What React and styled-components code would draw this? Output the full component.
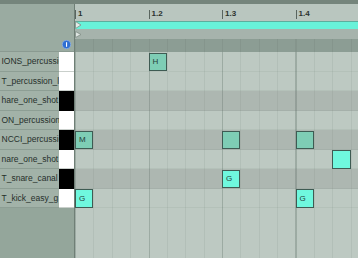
import styled, { createGlobalStyle } from 'styled-components';

const SIXTEENTH = 18.375;
const BEAT = SIXTEENTH * 4;
const ROW_H = 19.5;

let Global = createGlobalStyle`
  html, body { margin:0; padding:0; background:#bdc9c2; }
  body { font-family:"Liberation Sans", Arial, sans-serif; }
`;

let Frame = styled.div`
  width:358px; height:258px; overflow:hidden;
  display:flex; flex-flow:column;
  background:#bdc9c2;
`;

let TopStrip = styled.div`
  height:4px; background:#75857c; flex:none;
`;

let Body = styled.div`
  flex:1; display:flex; min-height:0;
`;

let LeftCol = styled.div`
  width:74px; flex:none; display:flex; flex-flow:column;
  background:#94a69b;
`;

let Divider = styled.div`
  width:1px; flex:none; background:#6f7f76;
`;

let RightCol = styled.div`
  flex:1; display:flex; flex-flow:column; min-width:0;
`;

let HeadLeft = styled.div`
  height:48px; flex:none; background:#9aaba1;
  display:flex; justify-content:flex-end; align-items:flex-end;
  padding:0 3px 2px 0; box-sizing:border-box;
  border-bottom:1px solid #8a9a91;
`;

let KeyRow = styled.div`
  height:${ROW_H}px; display:flex; flex:none;
  box-sizing:border-box;
`;

let Label = styled.div`
  width:59px; flex:none; overflow:hidden; white-space:nowrap;
  background:#a2b2a8; color:#26302b;
  font-size:8.5px; line-height:${ROW_H - 1}px;
  padding-left:1.5px; box-sizing:border-box;
  border-bottom:1px solid #8d9e94;
`;

let Key = styled.div`
  width:15px; flex:none; box-sizing:border-box;
  background:${p => (p.$black ? '#000' : '#fff')};
  border-bottom:1px solid ${p => (p.$black ? '#000' : '#c9cfcb')};
`;

let Ruler = styled.div`
  height:17px; flex:none; position:relative;
  background:#b9c6bf;
`;

let Mark = styled.div`
  position:absolute; top:8px; height:9px;
  border-left:1px solid #59655f;
  padding-left:2px;
  font-size:8px; font-weight:bold; line-height:8px; color:#2c332f;
  margin-top:-2px;
`;

let Clip = styled.div`
  height:8px; flex:none; position:relative;
  background:#68f2d9;
  border-top:1px solid #5cae9d;
  box-sizing:border-box;
`;

let LoopStrip = styled.div`
  height:10px; flex:none; position:relative;
  background:#a6b3ac;
`;

let Flag = styled.svg`
  position:absolute; left:0; top:${p => p.$top}px;
`;

let Band = styled.div`
  height:13px; flex:none; background:#8c9d94;
  background-image:repeating-linear-gradient(to right, rgba(0,0,0,0.05) 0 1px, transparent 1px ${SIXTEENTH}px);
`;

let Lanes = styled.div`
  flex:1; display:flex; flex-flow:column;
  background-color:#bdc9c2;
  background-image:
    repeating-linear-gradient(to right, rgba(70,90,80,0.2) 0 1px, transparent 1px ${BEAT}px),
    repeating-linear-gradient(to right, rgba(70,90,80,0.09) 0 1px, transparent 1px ${SIXTEENTH}px);
`;

let Lane = styled.div`
  height:${ROW_H}px; flex:none; position:relative;
  background:${p => (p.$black ? 'rgba(120,120,120,0.22)' : 'transparent')};
  box-shadow:inset 0 -1px 0 rgba(80,100,90,0.08);
`;

let Note = styled.div`
  position:absolute; top:0.5px; height:${ROW_H - 1}px; width:${SIXTEENTH}px;
  box-sizing:border-box;
  background:${p => (p.$bright ? '#6ff8de' : '#7ecdb5')};
  border:1px solid #3e5b53;
  font-size:8px; color:#25403a;
  display:flex; align-items:center; padding-left:3px;
`;

let Filler = styled.div`
  flex:1;
`;

const rows = [
  { label: 'IONS_percussion', black: false, notes: [{ at: 4, tag: 'H' }] },
  { label: 'T_percussion_loop', black: false, notes: [] },
  { label: 'hare_one_shot', black: true, notes: [] },
  { label: 'ON_percussion_', black: false, notes: [] },
  { label: 'NCCI_percussion', black: true, notes: [{ at: 0, tag: 'M' }, { at: 8 }, { at: 12 }] },
  { label: 'nare_one_shot', black: false, notes: [{ at: 14, bright: true }] },
  { label: 'T_snare_canal', black: true, notes: [{ at: 8, tag: 'G', bright: true }] },
  { label: 'T_kick_easy_g', black: false, notes: [{ at: 0, tag: 'G', bright: true }, { at: 12, tag: 'G', bright: true }] },
];

function BlueDot(){
  return(
    <svg width="9" height="9" viewBox="0 0 9 9">
      <circle cx="4.5" cy="4.5" r="4.2" fill="#2f6fd2" stroke="#86aee8" strokeWidth="0.8" />
      <rect x="4" y="2.2" width="1.1" height="4.6" fill="#fff" />
    </svg>
  )
}

function App(){
  return(
    <>
      <Global />
      <Frame>
        <TopStrip />
        <Body>
          <LeftCol>
            <HeadLeft><BlueDot /></HeadLeft>
            {rows.map((r, i) => (
              <KeyRow key={i}>
                <Label>{r.label}</Label>
                <Key $black={r.black} />
              </KeyRow>
            ))}
          </LeftCol>
          <Divider />
          <RightCol>
            <Ruler>
              {['1', '1.2', '1.3', '1.4'].map((t, i) => (
                <Mark key={t} style={{ left: i * BEAT }}>{t}</Mark>
              ))}
            </Ruler>
            <Clip>
              <Flag $top={-1} width="7" height="8" viewBox="0 0 7 8">
                <path d="M0.5 0.5 L6 4 L0.5 7.5 Z" fill="#e4ebe7" stroke="#7d8b84" strokeWidth="0.8" />
              </Flag>
            </Clip>
            <LoopStrip>
              <Flag $top={1.5} width="7" height="7" viewBox="0 0 7 7">
                <path d="M0.5 0.5 L6 3.5 L0.5 6.5 Z" fill="#dfe6e2" stroke="#7d8b84" strokeWidth="0.8" />
              </Flag>
            </LoopStrip>
            <Band />
            <Lanes>
              {rows.map((r, i) => (
                <Lane key={i} $black={r.black}>
                  {r.notes.map((n, j) => (
                    <Note key={j} $bright={n.bright} style={{ left: n.at * SIXTEENTH }}>{n.tag}</Note>
                  ))}
                </Lane>
              ))}
              <Filler />
            </Lanes>
          </RightCol>
        </Body>
      </Frame>
    </>
  )
}

export default App;
